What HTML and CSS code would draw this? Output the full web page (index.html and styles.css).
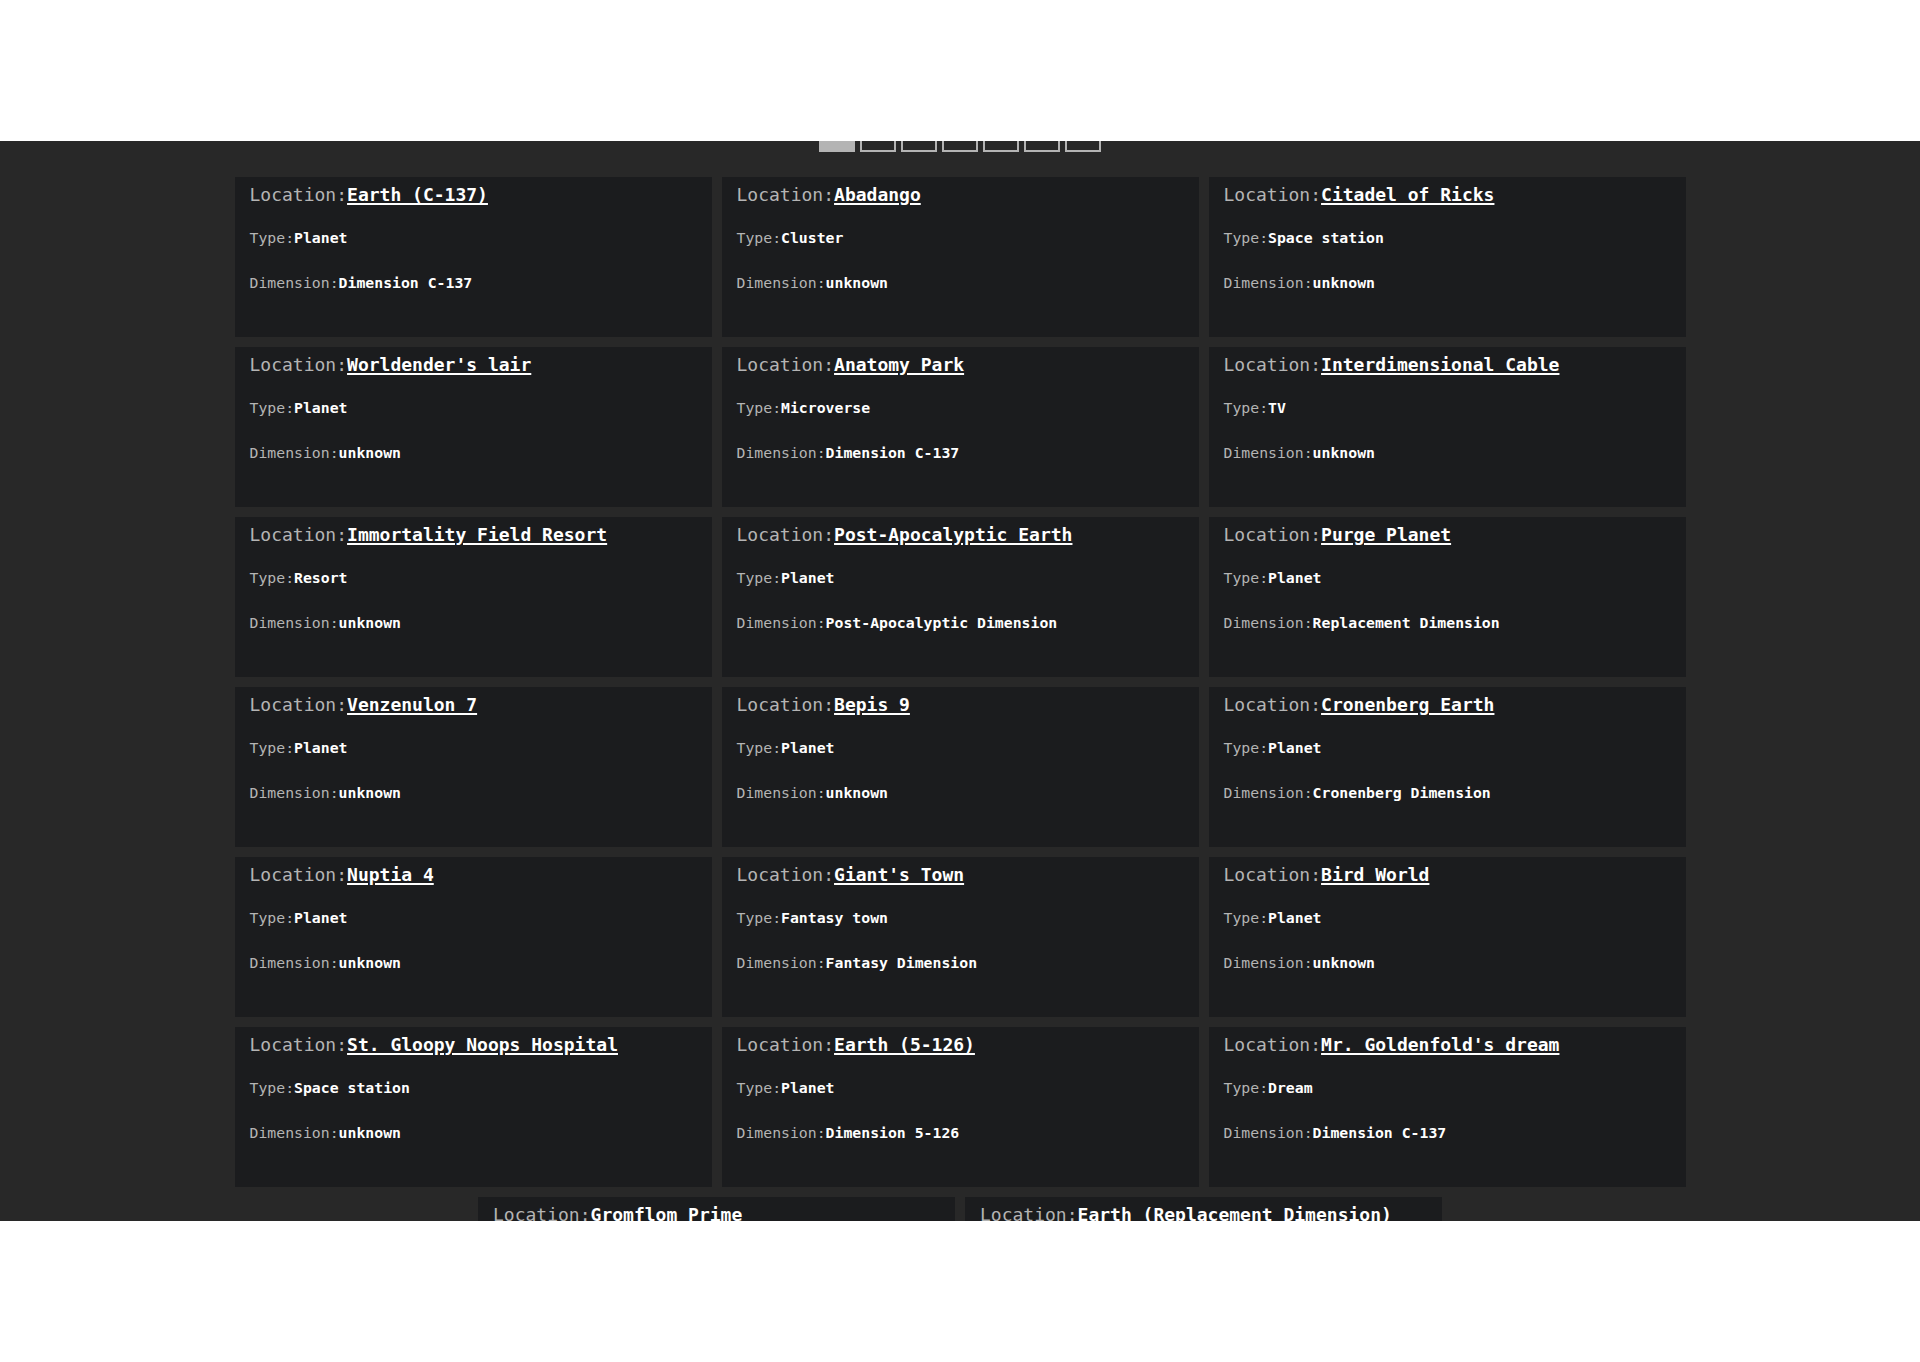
FILE: index.html
```html
<!DOCTYPE html>
<html lang="en">
<head>
<meta charset="utf-8">
<title>Locations</title>
<link rel="stylesheet" href="styles.css">
</head>
<body>
<header class="top-cover"></header>
<main class="main">
  <nav class="pager">
    <span class="pg pg-active"></span>
    <span class="pg"></span>
    <span class="pg"></span>
    <span class="pg"></span>
    <span class="pg"></span>
    <span class="pg"></span>
    <span class="pg"></span>
  </nav>
  <section class="grid">
    <article class="card"><div class="loc"><span class="lbl">Location:</span><a class="name" href="#">Earth (C-137)</a></div><div class="row r1"><span class="lbl">Type:</span><b>Planet</b></div><div class="row r2"><span class="lbl">Dimension:</span><b>Dimension C-137</b></div></article>
    <article class="card"><div class="loc"><span class="lbl">Location:</span><a class="name" href="#">Abadango</a></div><div class="row r1"><span class="lbl">Type:</span><b>Cluster</b></div><div class="row r2"><span class="lbl">Dimension:</span><b>unknown</b></div></article>
    <article class="card"><div class="loc"><span class="lbl">Location:</span><a class="name" href="#">Citadel of Ricks</a></div><div class="row r1"><span class="lbl">Type:</span><b>Space station</b></div><div class="row r2"><span class="lbl">Dimension:</span><b>unknown</b></div></article>
    <article class="card"><div class="loc"><span class="lbl">Location:</span><a class="name" href="#">Worldender's lair</a></div><div class="row r1"><span class="lbl">Type:</span><b>Planet</b></div><div class="row r2"><span class="lbl">Dimension:</span><b>unknown</b></div></article>
    <article class="card"><div class="loc"><span class="lbl">Location:</span><a class="name" href="#">Anatomy Park</a></div><div class="row r1"><span class="lbl">Type:</span><b>Microverse</b></div><div class="row r2"><span class="lbl">Dimension:</span><b>Dimension C-137</b></div></article>
    <article class="card"><div class="loc"><span class="lbl">Location:</span><a class="name" href="#">Interdimensional Cable</a></div><div class="row r1"><span class="lbl">Type:</span><b>TV</b></div><div class="row r2"><span class="lbl">Dimension:</span><b>unknown</b></div></article>
    <article class="card"><div class="loc"><span class="lbl">Location:</span><a class="name" href="#">Immortality Field Resort</a></div><div class="row r1"><span class="lbl">Type:</span><b>Resort</b></div><div class="row r2"><span class="lbl">Dimension:</span><b>unknown</b></div></article>
    <article class="card"><div class="loc"><span class="lbl">Location:</span><a class="name" href="#">Post-Apocalyptic Earth</a></div><div class="row r1"><span class="lbl">Type:</span><b>Planet</b></div><div class="row r2"><span class="lbl">Dimension:</span><b>Post-Apocalyptic Dimension</b></div></article>
    <article class="card"><div class="loc"><span class="lbl">Location:</span><a class="name" href="#">Purge Planet</a></div><div class="row r1"><span class="lbl">Type:</span><b>Planet</b></div><div class="row r2"><span class="lbl">Dimension:</span><b>Replacement Dimension</b></div></article>
    <article class="card"><div class="loc"><span class="lbl">Location:</span><a class="name" href="#">Venzenulon 7</a></div><div class="row r1"><span class="lbl">Type:</span><b>Planet</b></div><div class="row r2"><span class="lbl">Dimension:</span><b>unknown</b></div></article>
    <article class="card"><div class="loc"><span class="lbl">Location:</span><a class="name" href="#">Bepis 9</a></div><div class="row r1"><span class="lbl">Type:</span><b>Planet</b></div><div class="row r2"><span class="lbl">Dimension:</span><b>unknown</b></div></article>
    <article class="card"><div class="loc"><span class="lbl">Location:</span><a class="name" href="#">Cronenberg Earth</a></div><div class="row r1"><span class="lbl">Type:</span><b>Planet</b></div><div class="row r2"><span class="lbl">Dimension:</span><b>Cronenberg Dimension</b></div></article>
    <article class="card"><div class="loc"><span class="lbl">Location:</span><a class="name" href="#">Nuptia 4</a></div><div class="row r1"><span class="lbl">Type:</span><b>Planet</b></div><div class="row r2"><span class="lbl">Dimension:</span><b>unknown</b></div></article>
    <article class="card"><div class="loc"><span class="lbl">Location:</span><a class="name" href="#">Giant's Town</a></div><div class="row r1"><span class="lbl">Type:</span><b>Fantasy town</b></div><div class="row r2"><span class="lbl">Dimension:</span><b>Fantasy Dimension</b></div></article>
    <article class="card"><div class="loc"><span class="lbl">Location:</span><a class="name" href="#">Bird World</a></div><div class="row r1"><span class="lbl">Type:</span><b>Planet</b></div><div class="row r2"><span class="lbl">Dimension:</span><b>unknown</b></div></article>
    <article class="card"><div class="loc"><span class="lbl">Location:</span><a class="name" href="#">St. Gloopy Noops Hospital</a></div><div class="row r1"><span class="lbl">Type:</span><b>Space station</b></div><div class="row r2"><span class="lbl">Dimension:</span><b>unknown</b></div></article>
    <article class="card"><div class="loc"><span class="lbl">Location:</span><a class="name" href="#">Earth (5-126)</a></div><div class="row r1"><span class="lbl">Type:</span><b>Planet</b></div><div class="row r2"><span class="lbl">Dimension:</span><b>Dimension 5-126</b></div></article>
    <article class="card"><div class="loc"><span class="lbl">Location:</span><a class="name" href="#">Mr. Goldenfold's dream</a></div><div class="row r1"><span class="lbl">Type:</span><b>Dream</b></div><div class="row r2"><span class="lbl">Dimension:</span><b>Dimension C-137</b></div></article>
    <article class="card"><div class="loc"><span class="lbl">Location:</span><a class="name plain" href="#">Gromflom Prime</a></div><div class="row r1"><span class="lbl">Type:</span><b>Planet</b></div><div class="row r2"><span class="lbl">Dimension:</span><b>Replacement Dimension</b></div></article>
    <article class="card"><div class="loc"><span class="lbl">Location:</span><a class="name plain" href="#">Earth (Replacement Dimension)</a></div><div class="row r1"><span class="lbl">Type:</span><b>Planet</b></div><div class="row r2"><span class="lbl">Dimension:</span><b>Replacement Dimension</b></div></article>
  </section>
</main>
<footer class="bottom-cover"></footer>
</body>
</html>
```

FILE: styles.css
```css
html, body {
  margin: 0;
  padding: 0;
}

body {
  background: #282828;
  font-family: "DejaVu Sans Mono", "Liberation Mono", monospace;
  height: 1362px;
  overflow: hidden;
}

.top-cover {
  position: fixed;
  top: 0;
  left: 0;
  right: 0;
  height: 141px;
  background: #ffffff;
  z-index: 10;
}

.bottom-cover {
  position: fixed;
  left: 0;
  right: 0;
  bottom: 0;
  height: 141px;
  background: #ffffff;
  z-index: 10;
}

.main {
  padding-top: 127px;
}

.pager {
  display: flex;
  justify-content: center;
  gap: 5px;
  height: 25px;
  margin-bottom: 25px;
}

.pg {
  box-sizing: border-box;
  width: 36px;
  height: 25px;
  border: 2px solid #b4b4b4;
}

.pg-active {
  background: #b4b4b4;
}

.grid {
  width: 1451px;
  margin: 0 auto;
  display: flex;
  flex-wrap: wrap;
  justify-content: center;
  gap: 10px;
}

.card {
  box-sizing: border-box;
  width: 477px;
  height: 160px;
  background: #1b1c1e;
  padding: 7px 15px 0;
  color: #b4b4b4;
}

.loc {
  font-size: 18px;
  line-height: 21px;
  white-space: nowrap;
}

.name {
  color: #ffffff;
  font-weight: bold;
  text-decoration: underline;
  text-decoration-thickness: 1.5px;
  text-underline-offset: 2px;
}

.name.plain {
  text-decoration: none;
}

.row {
  font-size: 14.8px;
  line-height: 17px;
  white-space: nowrap;
}

.row b {
  color: #ffffff;
  font-weight: bold;
}

.r1 {
  margin-top: 24px;
}

.r2 {
  margin-top: 28px;
}
```
